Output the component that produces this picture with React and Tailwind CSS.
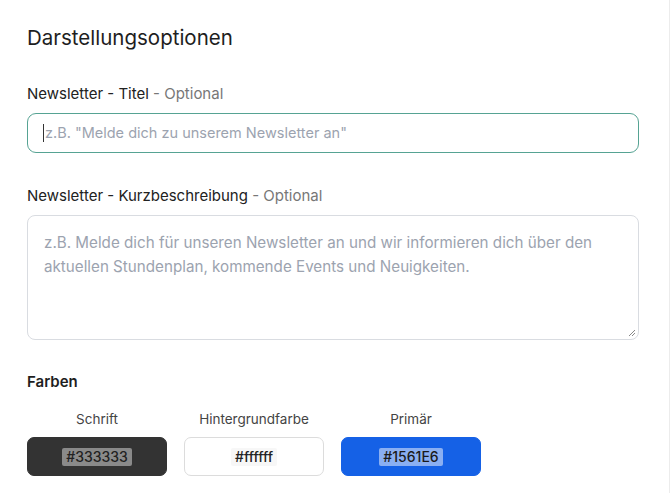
import React from "react";

export default function App() {
  const swatches = [
    { label: "Schrift", value: "#333333", box: "bg-[#333333] border-[#333333]", chip: "bg-[#8a8a8a] text-[#222]" },
    { label: "Hintergrundfarbe", value: "#ffffff", box: "bg-white border-[#dcdcdc]", chip: "bg-[#f7f7f7] text-[#222]" },
    { label: "Primär", value: "#1561E6", box: "bg-[#1561e6] border-[#1561e6]", chip: "bg-[#8aaff2] text-[#1a1a1a]" },
  ];
  return (
    <div
      className="w-[670px] h-[493px] bg-white border-r border-[#ececec] overflow-hidden text-[#222]"
      style={{ fontFamily: "Inter, 'Noto Sans', sans-serif" }}
    >
      <div className="pl-[27px] pr-[31px] pt-[24px]">
        <h2 className="text-[20.5px] leading-[28px] font-normal text-[#1e1e1e]">
          Darstellungsoptionen
        </h2>

        <div className="mt-[31px] text-[15px] leading-[22px] text-[#222]">
          Newsletter - Titel <span className="text-[#777]">- Optional</span>
        </div>
        <div className="mt-[8px] h-[40px] w-[612px] rounded-[9px] border-[1.5px] border-[#56a393] flex items-center pl-[15px]">
          <span className="w-px h-[18px] bg-[#333] mr-px" />
          <span className="text-[14.5px] text-[#9ca3af]">z.B. "Melde dich zu unserem Newsletter an"</span>
        </div>

        <div className="mt-[32px] text-[15px] leading-[22px] text-[#222]">
          Newsletter - Kurzbeschreibung <span className="text-[#777]">- Optional</span>
        </div>
        <div className="relative mt-[8px] h-[125px] w-[612px] rounded-[8px] border border-[#d9dce1] px-[16px] pt-[15px]">
          <p className="text-[15.2px] leading-[24px] text-[#9ca3af]">
            z.B. Melde dich für unseren Newsletter an und wir informieren dich über den aktuellen Stundenplan, kommende Events und Neuigkeiten.
          </p>
          <svg className="absolute right-[2px] bottom-[2px]" width="8" height="8" viewBox="0 0 8 8">
            <path d="M7 1 L1 7 M7 4 L4 7" stroke="#888" strokeWidth="1" />
          </svg>
        </div>

        <div className="mt-[31px] text-[15px] leading-[22px] font-semibold text-[#1e1e1e]">Farben</div>
        <div className="mt-[16px] flex gap-[17px]">
          {swatches.map((s) => (
            <div key={s.label} className="w-[140px] flex flex-col items-center">
              <div className="text-[13.5px] leading-[20px] text-[#444]">{s.label}</div>
              <div className={`mt-[8px] w-[140px] h-[39px] rounded-[7px] border flex items-center justify-center ${s.box}`}>
                <span className={`px-[4px] rounded-[2px] text-[14px] leading-[18px] font-medium ${s.chip}`}>{s.value}</span>
              </div>
            </div>
          ))}
        </div>
      </div>
    </div>
  );
}
